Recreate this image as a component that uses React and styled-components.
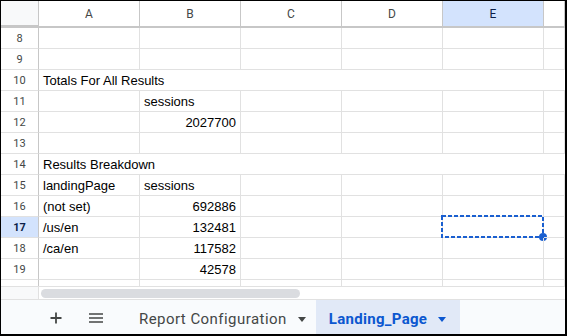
import styled, { createGlobalStyle, css } from "styled-components";

const GlobalStyle = createGlobalStyle`
  html, body {
    margin: 0;
    padding: 0;
    background: #ffffff;
  }
  body {
    font-family: "Liberation Sans", Arial, sans-serif;
  }
`;

const Frame = styled.div`
  width: 567px;
  height: 336px;
  box-sizing: border-box;
  border: 1px solid #000;
  border-right-width: 2px;
  border-bottom-width: 2px;
  display: flex;
  flex-direction: column;
  overflow: hidden;
  background: #fff;
`;

const Sheet = styled.div`
  height: 285px;
  overflow: hidden;
  display: grid;
  grid-template-columns: 38px repeat(5, 101px) 1fr;
  grid-template-rows: 27px;
  grid-auto-rows: 21px;
`;

const Corner = styled.div`
  box-sizing: border-box;
  background: #f8f9fa;
  border-bottom: 3px solid #c7c7c7;
  border-right: 1px solid #c7c7c7;
`;

const ColHeader = styled.div`
  box-sizing: border-box;
  display: flex;
  align-items: center;
  justify-content: center;
  font-family: Roboto, "Liberation Sans", sans-serif;
  font-size: 12px;
  color: #444746;
  background: ${(p) => (p.$active ? "#d3e3fd" : "#fff")};
  border-right: 1px solid #c7c7c7;
  border-bottom: 2px solid #c7c7c7;
  padding-top: 1px;
  ${(p) =>
    p.$active &&
    css`
      color: #0b1f4a;
    `}
`;

const RowHeader = styled.div`
  box-sizing: border-box;
  display: flex;
  align-items: center;
  justify-content: center;
  font-family: Roboto, "Liberation Sans", sans-serif;
  font-size: 11px;
  color: #444746;
  background: ${(p) => (p.$active ? "#d3e3fd" : "#fff")};
  border-right: 1px solid #c7c7c7;
  border-bottom: 1px solid #e1e1e1;
  font-weight: ${(p) => (p.$active ? 700 : 400)};
  ${(p) =>
    p.$active &&
    css`
      color: #0b1f4a;
    `}
`;

const Cell = styled.div`
  position: relative;
  box-sizing: border-box;
  display: flex;
  align-items: center;
  justify-content: ${(p) => (p.$num ? "flex-end" : "flex-start")};
  padding: 1px 4px 0 4px;
  font-size: 13px;
  color: #000;
  white-space: nowrap;
  border-right: 1px solid #e1e1e1;
  border-bottom: 1px solid #e1e1e1;
  ${(p) =>
    p.$span &&
    css`
      grid-column: 2 / -1;
      border-right: none;
    `}
`;

const CopyBox = styled.svg`
  position: absolute;
  left: -2px;
  top: -2px;
  overflow: visible;
`;

const ScrollStrip = styled.div`
  height: 14px;
  box-sizing: border-box;
  display: flex;
  border-top: 1px solid #e1e1e1;
  border-bottom: 1px solid #e1e1e1;
`;

const ScrollGutter = styled.div`
  width: 38px;
  background: #f8f9fa;
  border-right: 1px solid #e1e1e1;
  box-sizing: border-box;
`;

const Track = styled.div`
  flex: 1;
  display: flex;
  align-items: center;
  padding-left: 2px;
`;

const Thumb = styled.div`
  width: 259px;
  height: 9px;
  border-radius: 5px;
  background: #dadce0;
`;

const TabBar = styled.div`
  flex: 1;
  display: flex;
  align-items: stretch;
  background: #f9fbfd;
`;

const IconButton = styled.div`
  width: 40px;
  display: flex;
  align-items: center;
  justify-content: center;
  padding-top: 2px;
  color: #444746;
  ${(p) =>
    p.$first &&
    css`
      margin-left: 35px;
    `}
`;

const Tab = styled.div`
  display: flex;
  align-items: center;
  gap: 11px;
  padding: 3px 10px 0 ${(p) => (p.$active ? "13px" : "23px")};
  font-family: Roboto, "Open Sans", sans-serif;
  font-size: 15px;
  font-weight: 400;
  letter-spacing: 0.45px;
  color: ${(p) => (p.$active ? "#0b57d0" : "#444746")};
  background: ${(p) => (p.$active ? "#e1e9f7" : "transparent")};
  ${(p) =>
    p.$active &&
    css`
      font-weight: 700;
      letter-spacing: 0.3px;
      width: 144px;
      box-sizing: border-box;
    `}
`;

const Caret = styled.span`
  width: 0;
  height: 0;
  border-left: 4px solid transparent;
  border-right: 4px solid transparent;
  border-top: 5px solid currentColor;
  margin-top: 1px;
`;

const columns = ["A", "B", "C", "D", "E"];

const rows = [
  { n: 8 },
  { n: 9 },
  { n: 10, span: "Totals For All Results" },
  { n: 11, b: "sessions" },
  { n: 12, b: "2027700", num: true },
  { n: 13 },
  { n: 14, span: "Results Breakdown" },
  { n: 15, a: "landingPage", b: "sessions" },
  { n: 16, a: "(not set)", b: "692886", num: true },
  { n: 17, a: "/us/en", b: "132481", num: true, active: true },
  { n: 18, a: "/ca/en", b: "117582", num: true },
  { n: 19, b: "42578", num: true },
  { n: 20, a: "/uk/en", b: "42133", num: true },
];

const Selection = () => (
  <CopyBox width="103" height="23" viewBox="0 0 103 23">
    <rect
      x="1"
      y="1"
      width="101"
      height="21"
      fill="none"
      stroke="#1a5fd0"
      strokeWidth="2"
      strokeDasharray="4 2"
    />
    <circle cx="102" cy="22" r="4" fill="#1a5fd0" />
  </CopyBox>
);

const Plus = () => (
  <svg width="14" height="14" viewBox="0 0 14 14">
    <path d="M7 1.5v11M1.5 7h11" stroke="currentColor" strokeWidth="1.8" />
  </svg>
);

const Menu = () => (
  <svg width="16" height="12" viewBox="0 0 16 12">
    <path d="M1 2h14M1 6h14M1 10h14" stroke="currentColor" strokeWidth="1.6" />
  </svg>
);

export default function App() {
  return (
    <>
      <GlobalStyle />
      <Frame>
        <Sheet>
          <Corner />
          {columns.map((c) => (
            <ColHeader key={c} $active={c === "E"}>
              {c}
            </ColHeader>
          ))}
          <ColHeader />
          {rows.map((r) => (
            <Row key={r.n} row={r} />
          ))}
        </Sheet>
        <ScrollStrip>
          <ScrollGutter />
          <Track>
            <Thumb />
          </Track>
        </ScrollStrip>
        <TabBar>
          <IconButton $first>
            <Plus />
          </IconButton>
          <IconButton>
            <Menu />
          </IconButton>
          <Tab>
            Report Configuration
            <Caret />
          </Tab>
          <Tab $active>
            Landing_Page
            <Caret />
          </Tab>
        </TabBar>
      </Frame>
    </>
  );
}

const Row = ({ row }) => (
  <>
    <RowHeader $active={row.active}>{row.n}</RowHeader>
    {row.span ? (
      <Cell $span>{row.span}</Cell>
    ) : (
      <>
        <Cell>{row.a}</Cell>
        <Cell $num={row.num}>{row.b}</Cell>
        <Cell />
        <Cell />
        <Cell>{row.active && <Selection />}</Cell>
        <Cell />
      </>
    )}
  </>
);
